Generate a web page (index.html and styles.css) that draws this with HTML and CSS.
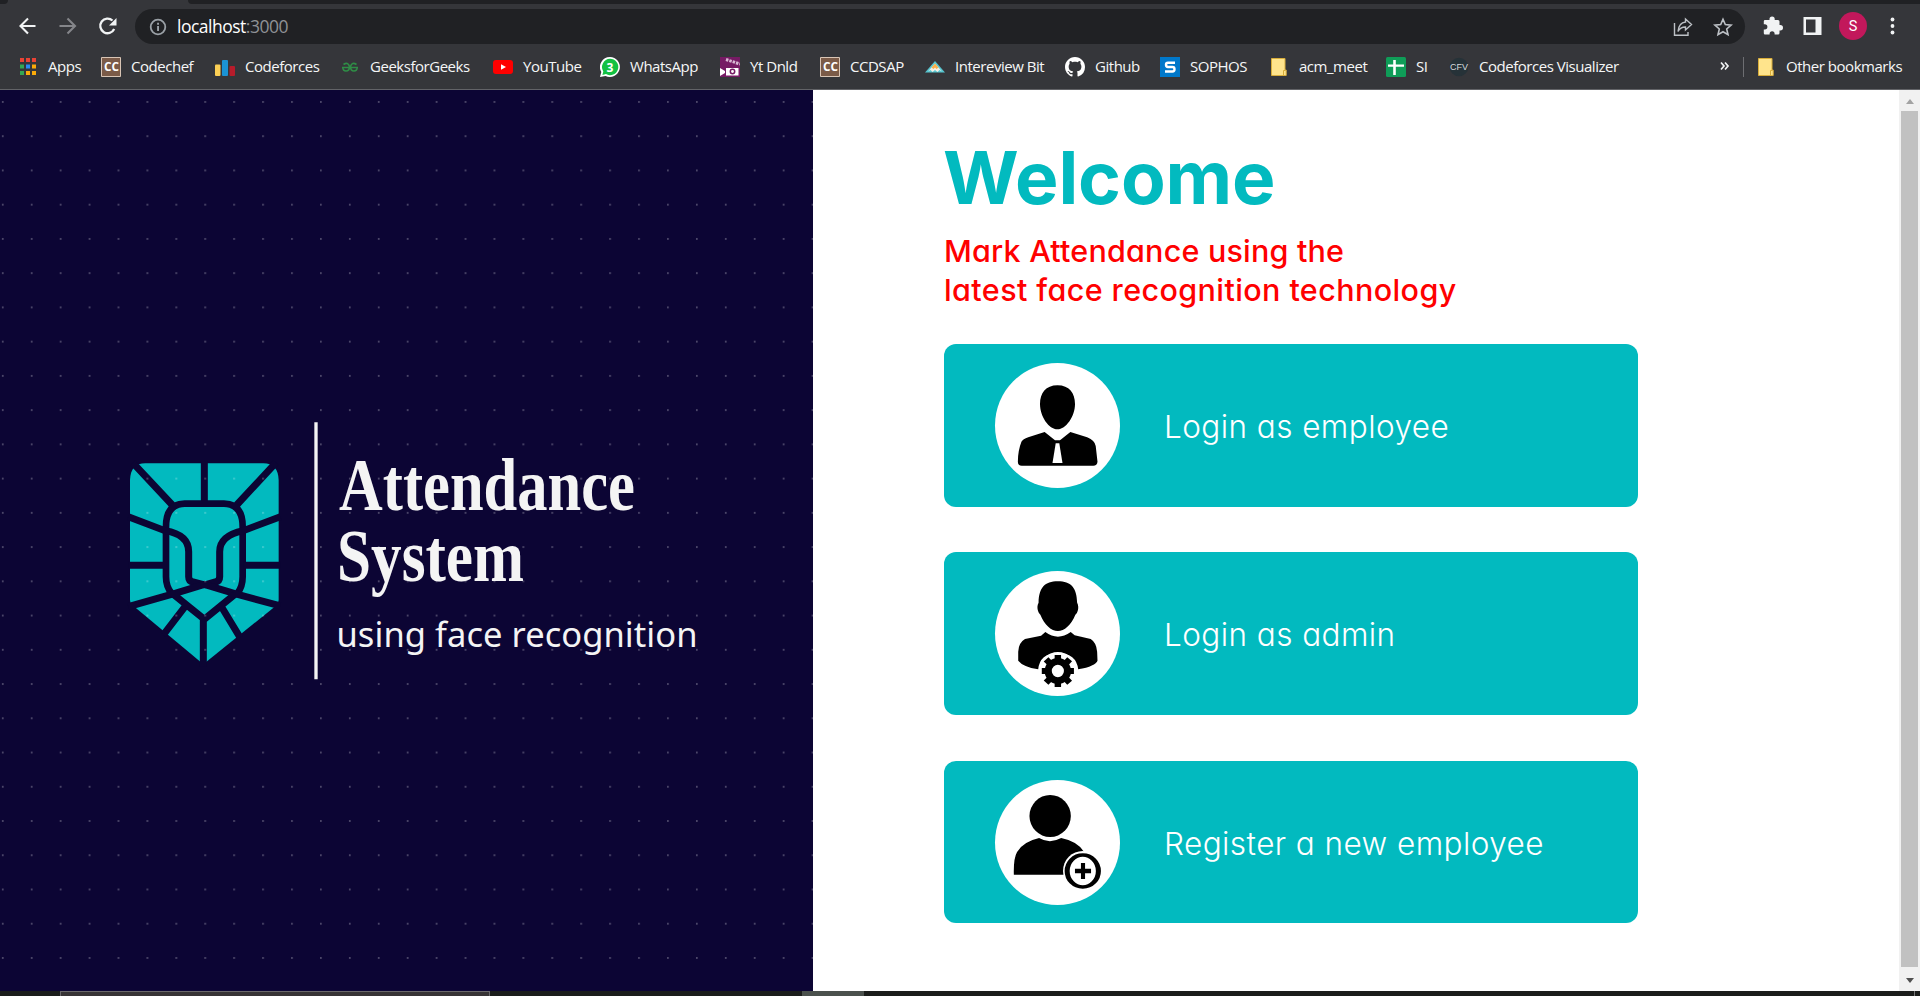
FILE: index.html
```html
<!DOCTYPE html>
<html lang="en">
<head>
<meta charset="utf-8">
<title>Attendance System</title>
<link rel="stylesheet" href="styles.css">
</head>
<body>
<header class="browser">
  <div class="tabstrip"><div class="tab-edge"></div><div class="tab-active"></div><div class="tab-rest"></div></div>
  <div class="toolbar">
    <svg class="nav" viewBox="0 0 135 35">
      <g fill="none" stroke-width="2.1">
        <path stroke="#f1f3f4" d="M35.500 17H21M28 9.500 20.500 17 28 24.500"/>
        <path stroke="#85868a" d="M59.500 17H74M67.500 9.500 75 17 67.500 24.500"/>
        <path stroke="#f1f3f4" stroke-width="2.300" d="M114.200 20A7.300 7.300 0 1 1 112.500 11.500"/>
      </g>
      <path fill="#f1f3f4" d="M116.500 9v7.500h-7.500z"/>
    </svg>
    <div class="omnibox">
      <svg class="info" viewBox="0 0 18 18"><circle cx="9" cy="9" r="7.300" fill="none" stroke="#9aa0a6" stroke-width="1.800"/><path fill="#9aa0a6" d="M8.100 8h1.900v5H8.100zM8.100 4.800h1.900v1.900H8.100z"/></svg>
      <div class="url"><span class="host">localhost</span>:3000</div>
      <svg class="share" viewBox="0 0 20 20" fill="none" stroke="#bdc1c6" stroke-width="1.400"><path d="M1.500 6V18.200H15V15"/><path d="M12.500 2 18.500 7.500 12.500 13V10C8.500 10 6.500 11.500 5 14.500 5.500 9 8 5.500 12.500 5Z"/></svg>
      <svg class="star" viewBox="0 0 20 20" fill="none" stroke="#bdc1c6" stroke-width="1.600"><path d="M10 2.200 12.300 7.600 18.100 8.100 13.700 12 15 17.700 10 14.700 5 17.700 6.300 12 1.900 8.100 7.700 7.600Z"/></svg>
    </div>
    <svg class="tools" viewBox="0 0 175 35">
      <path fill="#f1f3f4" d="M20 11h4.500V10a2.600 2.600 0 0 1 5.200 0v1H33q1.500 0 1.500 1.500V16h.8a2.700 2.700 0 0 1 0 5.400h-.8V24q0 1.500-1.500 1.500h-3.400v-.8a2.500 2.500 0 0 0-5 0v.8H20q-1.200 0-1.200-1.300v-3.800h1a2.600 2.600 0 0 0 0-5.200h-1v-3q0-1.200 1.200-1.200z"/>
      <path fill="#f1f3f4" fill-rule="evenodd" d="M58.500 8h18v18h-18zM61 10.500v13h9.500v-13z"/>
      <circle cx="108" cy="17" r="14" fill="#c2185b"/>
      <text x="108" y="22" class="avatar-letter" text-anchor="middle">S</text>
      <g fill="#f1f3f4"><circle cx="147.500" cy="10.500" r="1.900"/><circle cx="147.500" cy="17" r="1.900"/><circle cx="147.500" cy="23.500" r="1.900"/></g>
    </svg>
  </div>
  <nav class="bookmarks">
    <div class="bm"><svg viewBox="0 0 20 20"><path fill="#ea4335" d="M2 1h4v4H2zM8 1h4v4H8zM14 1h4v4h-4z"/><path fill="#34a853" d="M2 7.500h4v4H2zM2 14h4v4H2z"/><path fill="#2a8af6" d="M8 7.500h4v4H8z"/><path fill="#fbab09" d="M14 7.500h4v4h-4zM8 14h4v4H8zM14 14h4v4h-4z"/></svg><span>Apps</span></div>
    <div class="bm"><svg viewBox="0 0 20 20"><path fill="#7b5b48" stroke="#d9c5b5" d="M.5.500h19v19H.5z"/><text class="cc" x="3" y="14" textLength="15" lengthAdjust="spacingAndGlyphs">CC</text></svg><span>Codechef</span></div>
    <div class="bm"><svg viewBox="0 0 20 20"><rect y="7.500" width="5.500" height="11.500" rx="1" fill="#fbcf55"/><rect x="7" y="3" width="6" height="16" rx="1" fill="#1b93d4"/><rect x="14.500" y="9" width="5.500" height="10" rx="1" fill="#b71c2b"/></svg><span>Codeforces</span></div>
    <div class="bm"><svg viewBox="0 0 20 20" fill="none" stroke="#2f8d46" stroke-width="1.600"><path d="M2 10.500H18M3.500 7.500Q8 4.500 9.500 9.500 9.500 14 6 14 3 14 2.800 10.500M16.500 7.500Q12 4.500 10.500 9.500 10.500 14 14 14 17 14 17.200 10.500"/></svg><span>GeeksforGeeks</span></div>
    <div class="bm"><svg viewBox="0 0 20 20"><rect y="3" width="20" height="14" rx="3" fill="#f00"/><path fill="#fff" d="M8 7.200v5.600l5-2.800z"/></svg><span>YouTube</span></div>
    <div class="bm"><svg viewBox="0 0 20 20"><path fill="#fff" d="M10 0a10 10 0 1 1-4.500 19L0 20l1.300-5A10 10 0 0 1 10 0z"/><path fill="#12c143" d="M10 1.800a8.200 8.200 0 1 1-4 15.300l-3.600.8.900-3.500A8.200 8.200 0 0 1 10 1.800z"/><text class="wa" x="10" y="14.500" text-anchor="middle">3</text></svg><span>WhatsApp</span></div>
    <div class="bm"><svg viewBox="0 0 20 20"><path fill="#761b64" d="M0 0h20v20H0z"/><path fill="#fff" d="M6 11h12.500v7.500H6zM0 11l5 3v2l-5 3z"/><path stroke="#d9b8d4" stroke-width="3" stroke-dasharray="2.500 1" d="M6 2.500 20 7"/><circle cx="12.500" cy="14.500" r="2.200" fill="#fff" stroke="#761b64" stroke-width="1.500"/></svg><span>Yt Dnld</span></div>
    <div class="bm"><svg viewBox="0 0 20 20"><path fill="#7b5b48" stroke="#d9c5b5" d="M.5.500h19v19H.5z"/><text class="cc" x="3" y="14" textLength="15" lengthAdjust="spacingAndGlyphs">CC</text></svg><span>CCDSAP</span></div>
    <div class="bm"><svg viewBox="0 0 20 20"><path fill="#56c5d0" d="M10 4 20 15.500H0Z"/><path fill="#f4f0e6" d="M10 6.500 17 14.500 14.500 13 12.500 15 10 13 7.500 15 5.500 13 3 14.500Z"/><path fill="#f9b04b" d="M10 6.500 13.500 10.500 11.500 12 10 10.500 8.500 12 6.500 10.500Z"/></svg><span>Intereview Bit</span></div>
    <div class="bm"><svg viewBox="0 0 16 16"><path fill="#fff" d="M8 0C3.580 0 0 3.580 0 8c0 3.540 2.290 6.530 5.470 7.590.4.070.55-.17.55-.38 0-.19-.01-.82-.01-1.490-2.010.37-2.530-.49-2.690-.94-.09-.23-.48-.94-.82-1.130-.28-.15-.68-.52-.01-.53.63-.01 1.080.58 1.230.82.72 1.210 1.870.87 2.330.66.070-.52.28-.87.510-1.070-1.780-.2-3.640-.89-3.640-3.950 0-.87.310-1.590.82-2.150-.08-.2-.36-1.020.08-2.120 0 0 .67-.21 2.200.82.64-.18 1.320-.27 2-.27s1.360.09 2 .27c1.530-1.040 2.200-.82 2.200-.82.44 1.100.16 1.920.08 2.120.51.56.82 1.270.82 2.150 0 3.070-1.870 3.750-3.650 3.950.29.25.54.73.54 1.480 0 1.070-.01 1.930-.01 2.200 0 .21.150.46.55.38A8.010 8.010 0 0 0 16 8c0-4.420-3.580-8-8-8z"/></svg><span>Github</span></div>
    <div class="bm"><svg viewBox="0 0 20 20"><path fill="#0078ca" d="M0 0h20v20H0z"/><path fill="none" stroke="#fff" stroke-width="2.400" d="M15 5.700H8Q6 5.700 6 7.800T8 10H12.500Q14.500 10 14.500 12.200T12.500 14.500H5"/></svg><span>SOPHOS</span></div>
    <div class="bm"><svg viewBox="0 0 20 20"><path fill="#ffe48c" stroke="#d8ad3a" d="M2.500 1.500h13.500v11.500h1.200v5.500H2.500zM14.500 18v-4.500H16.500"/></svg><span>acm_meet</span></div>
    <div class="bm"><svg viewBox="0 0 20 20"><rect width="20" height="20" rx="1.500" fill="#0f9d58"/><path fill="#fff" d="M7.200 3h2.600v4.500H18v2.300H9.800V18H7.200V9.800H2V7.500h5.200z"/></svg><span>SI</span></div>
    <div class="bm"><svg viewBox="0 0 20 20"><circle cx="10" cy="10" r="9.300" fill="#263238"/><text class="cfv" x="1" y="13" textLength="18" lengthAdjust="spacingAndGlyphs">CFV</text></svg><span>Codeforces Visualizer</span></div>
    <svg class="more" viewBox="0 0 10 20" fill="none" stroke="#f1f3f4" stroke-width="1.700"><path d="M1 5.500 4 9 1 12.500M5 5.500 8 9 5 12.500"/></svg>
    <div class="bm other"><svg viewBox="0 0 20 20"><path fill="#ffe48c" stroke="#d8ad3a" d="M2.500 1.500h13.500v11.500h1.200v5.500H2.500zM14.500 18v-4.500H16.500"/></svg><span>Other bookmarks</span></div>
  </nav>
</header>

<main class="page">
  <svg class="brand" viewBox="0 0 813 901">
    <defs><pattern id="dots" x="1.900" y="11" width="28.920" height="34.240" patternUnits="userSpaceOnUse"><rect width="1.700" height="1.900" fill="#fff" opacity=".27"/></pattern></defs>
    <path fill="#0c0534" d="M0 0h813v901H0z"/>
    <g transform="translate(110 310) scale(.33333)">
      <path fill="#02babf" d="M60 240Q62 190 106 190H460Q504 190 506 240V600Q506 610 498 617L280 793 66 614Q60 608 60 600Z"/>
      <g fill="none" stroke="#0c0534" stroke-width="21">
        <path d="M283 185V305M68 188 187 315M498 188 380 315"/>
        <path stroke-width="20" d="M185 580Q168 560 168 530V380Q168 312 224 311H342Q398 312 398 380V530Q398 560 382 580"/>
        <path d="M55 350 165 392Q236 404 236 455V530Q236 545 250 546L283 555M511 350 400 392Q329 407 329 455V530Q329 545 315 546L283 555"/>
        <path d="M55 620 195 580 283 553 372 580 511 618M55 496H165M400 496H511"/>
        <path d="M190 583 283 658 375 583M280 650V800M225 620 160 705M333 618 390 712"/>
      </g>
      <path fill="#f4f4f4" d="M613 67h10v771h-10z"/>
    </g>
    <text class="logo-title" x="339" y="419.500" textLength="296" lengthAdjust="spacingAndGlyphs">Attendance</text>
    <text class="logo-title" x="337" y="491" textLength="187" lengthAdjust="spacingAndGlyphs">System</text>
    <text class="logo-sub" x="336.500" y="556.500" textLength="361">using face recognition</text>
    <path fill="url(#dots)" d="M0 0h813v901H0z"/>
  </svg>

  <section class="content">
    <h1>Welcome</h1>
    <p class="lead"><span class="line1">Mark Attendance using the</span><br><span class="line2">latest face recognition technology</span></p>
    <div class="choices">
      <a class="choice c1">
        <svg viewBox="182 99 350 375" preserveAspectRatio="none"><path d="M357 166C390 166 406 190 406 222 406 260 380 298 357 298 333 298 308 260 308 222 308 190 324 166 357 166ZM321 306 350 331H364L393 306 440 322Q462 332 464 348L469 395Q468 407 457 407H257Q246 407 246 395 246 362 256 335 260 328 275 322Z"/><path fill="#fff" d="M352 340H362L371 399H343Z"/></svg>
        <span>Login as employee</span>
      </a>
      <a class="choice c2">
        <svg viewBox="182 93 350 375" preserveAspectRatio="none"><path d="M358 124C395 124 411 143 412 188 419 202 413 220 407 224 395 255 376 273 358 273 340 273 321 255 309 224 303 218 297 202 304 188 305 143 321 124 358 124ZM323 276Q358 304 394 276L405 286 450 297Q466 308 468 335L469 362Q464 378 415 388 410 340 358 338 307 340 303 388 260 380 247 362V335Q248 308 266 297L311 287Z"/><ellipse cx="358" cy="393" rx="52" ry="57" fill="#fff"/><ellipse cx="358" cy="393" rx="27" ry="29" fill="none" stroke="#000" stroke-width="20"/><g stroke="#000" stroke-width="18"><path d="M358 345V365M358 421V441M313 393H333M384 393H403M325 358 341 375M376 411 391 428M391 358 376 375M341 411 325 428"/></g></svg>
        <span>Login as admin</span>
      </a>
      <a class="choice c3">
        <svg viewBox="142 90 272 375" preserveAspectRatio="none"><ellipse cx="262" cy="198" rx="45" ry="63"/><path d="M183 374Q182 325 190 306 203 275 238 264 261 283 286 264 322 274 336 306L300 374Z"/><ellipse cx="333" cy="363" rx="43" ry="60" fill="#fff"/><ellipse cx="333" cy="363" rx="34" ry="48" fill="#fff" stroke="#000" stroke-width="11"/><path d="M329 339h9v17h13v14h-13v17h-9v-17h-13v-14h13z"/></svg>
        <span>Register a new employee</span>
      </a>
    </div>
  </section>
  <div class="scrollbar"><i class="up"></i><div class="thumb"></div><i class="down"></i></div>
</main>
<footer class="taskbar"><div class="task-window"></div><div class="task-light"></div><div class="task-end"></div></footer>
</body>
</html>
```
FILE: styles.css
```css
* { box-sizing: border-box; }
body { margin: 0; width: 1920px; height: 996px; overflow: hidden; display: flex; flex-direction: column; background: #fff; font-family: "Open Sans", "Noto Sans", sans-serif; }
svg { display: block; flex: none; }

.browser { height: 90px; flex: none; background: #35363a; border-bottom: 1px solid #626367; }
.tabstrip { height: 4px; display: flex; }
.tab-edge { width: 8px; background: #202124; border-bottom-right-radius: 4px; }
.tab-active { width: 180px; background: #35363a; }
.tab-rest { flex: 1; background: #202124; border-bottom-left-radius: 8px; }
.toolbar { display: flex; height: 40px; padding-top: 5px; }
.nav { width: 135px; height: 35px; }
.omnibox { width: 1610px; height: 35px; border-radius: 18px; background: #202124; display: flex; align-items: center; padding: 0 12px 0 14px; }
.info { width: 18px; height: 18px; }
.url { margin-left: 10px; padding-bottom: 2px; font-size: 17.5px; letter-spacing: -.5px; color: #8f9296; flex: 1; white-space: nowrap; }
.host { color: #fff; }
.share { width: 20px; height: 20px; margin-right: 20px; }
.star { width: 20px; height: 20px; }
.tools { width: 175px; height: 35px; }
.avatar-letter { font: 14.5px Roboto, sans-serif; fill: #fff; }

.bookmarks { height: 45px; padding-left: 18px; display: grid; align-items: center; grid-template-columns: 83px 114px 125px 153px 107px 120px 100px 105px 140px 95px 109px 117px 63px 271px 23px 177px; }
.bm { display: flex; align-items: center; gap: 10px; color: #f5f6f7; font-size: 15px; line-height: 20px; letter-spacing: -.47px; white-space: nowrap; }
.bm span { padding-bottom: 2px; }
.bm svg { width: 20px; height: 20px; }
.more { width: 10px; height: 20px; }
.other { height: 20px; border-left: 1px solid #6d6e72; padding-left: 12px; }
.cc { font: bold 12px "Open Sans", sans-serif; letter-spacing: 0; fill: #fff; }
.wa { font: bold 12px "Open Sans", sans-serif; letter-spacing: 0; fill: #fff; }
.cfv { font: 9px "Liberation Sans", sans-serif; letter-spacing: 0; fill: #d5dadc; }

.page { height: 901px; flex: none; display: flex; }
.brand { width: 813px; height: 901px; }
.logo-title { font: bold 73px "Liberation Serif", serif; fill: #f4f4f4; }
.logo-sub { font: 34.5px "Noto Sans", sans-serif; fill: #f4f4f4; }

.content { width: 1086px; padding: 44px 0 0 131px; font-family: Inter, "Open Sans", sans-serif; font-feature-settings: "cv11"; }
h1 { margin: 0 0 0 -1px; font-size: 73px; line-height: 88px; font-weight: 700; color: #02babf; letter-spacing: -.1px; }
.lead { margin: 9px 0 0; font-size: 30.5px; line-height: 39px; font-weight: 500; color: #f00; white-space: nowrap; }
.line1 { letter-spacing: .2px; }
.line2 { letter-spacing: .4px; }
.choices { margin-top: 35px; display: grid; grid-template-rows: 163px 163px 162px; row-gap: 45px; }
.choice { width: 694px; border-radius: 12px; background: #02babf; display: flex; align-items: center; padding-left: 51px; color: #fff; font-size: 31.5px; letter-spacing: .43px; font-weight: 300; }
.c3 { margin-top: 1px; height: 162px; }
.choice svg { width: 125px; height: 125px; border-radius: 50%; background: #fff; }
.choice span { margin-left: 44px; padding-top: 2px; white-space: nowrap; }

.scrollbar { width: 21px; background: #f1f1f1; display: flex; flex-direction: column; align-items: center; padding: 9px 0 8px; }
.up { border: 4.500px solid transparent; border-top: 0; border-bottom: 5px solid #a3a3a3; }
.thumb { width: 17px; height: 856px; margin-top: 7px; background: #c1c1c1; }
.down { margin-top: 11px; border: 4.500px solid transparent; border-bottom: 0; border-top: 5px solid #505050; }

.taskbar { height: 5px; flex: none; display: flex; background: #1b1d1b; }
.task-window { width: 430px; margin-left: 60px; background: #373335; border: 1px solid #6a686a; border-bottom: 0; }
.task-light { width: 62px; margin-left: 312px; background: #4b514d; }
.task-end { margin-left: 1050px; width: 1px; background: #777; }
```
